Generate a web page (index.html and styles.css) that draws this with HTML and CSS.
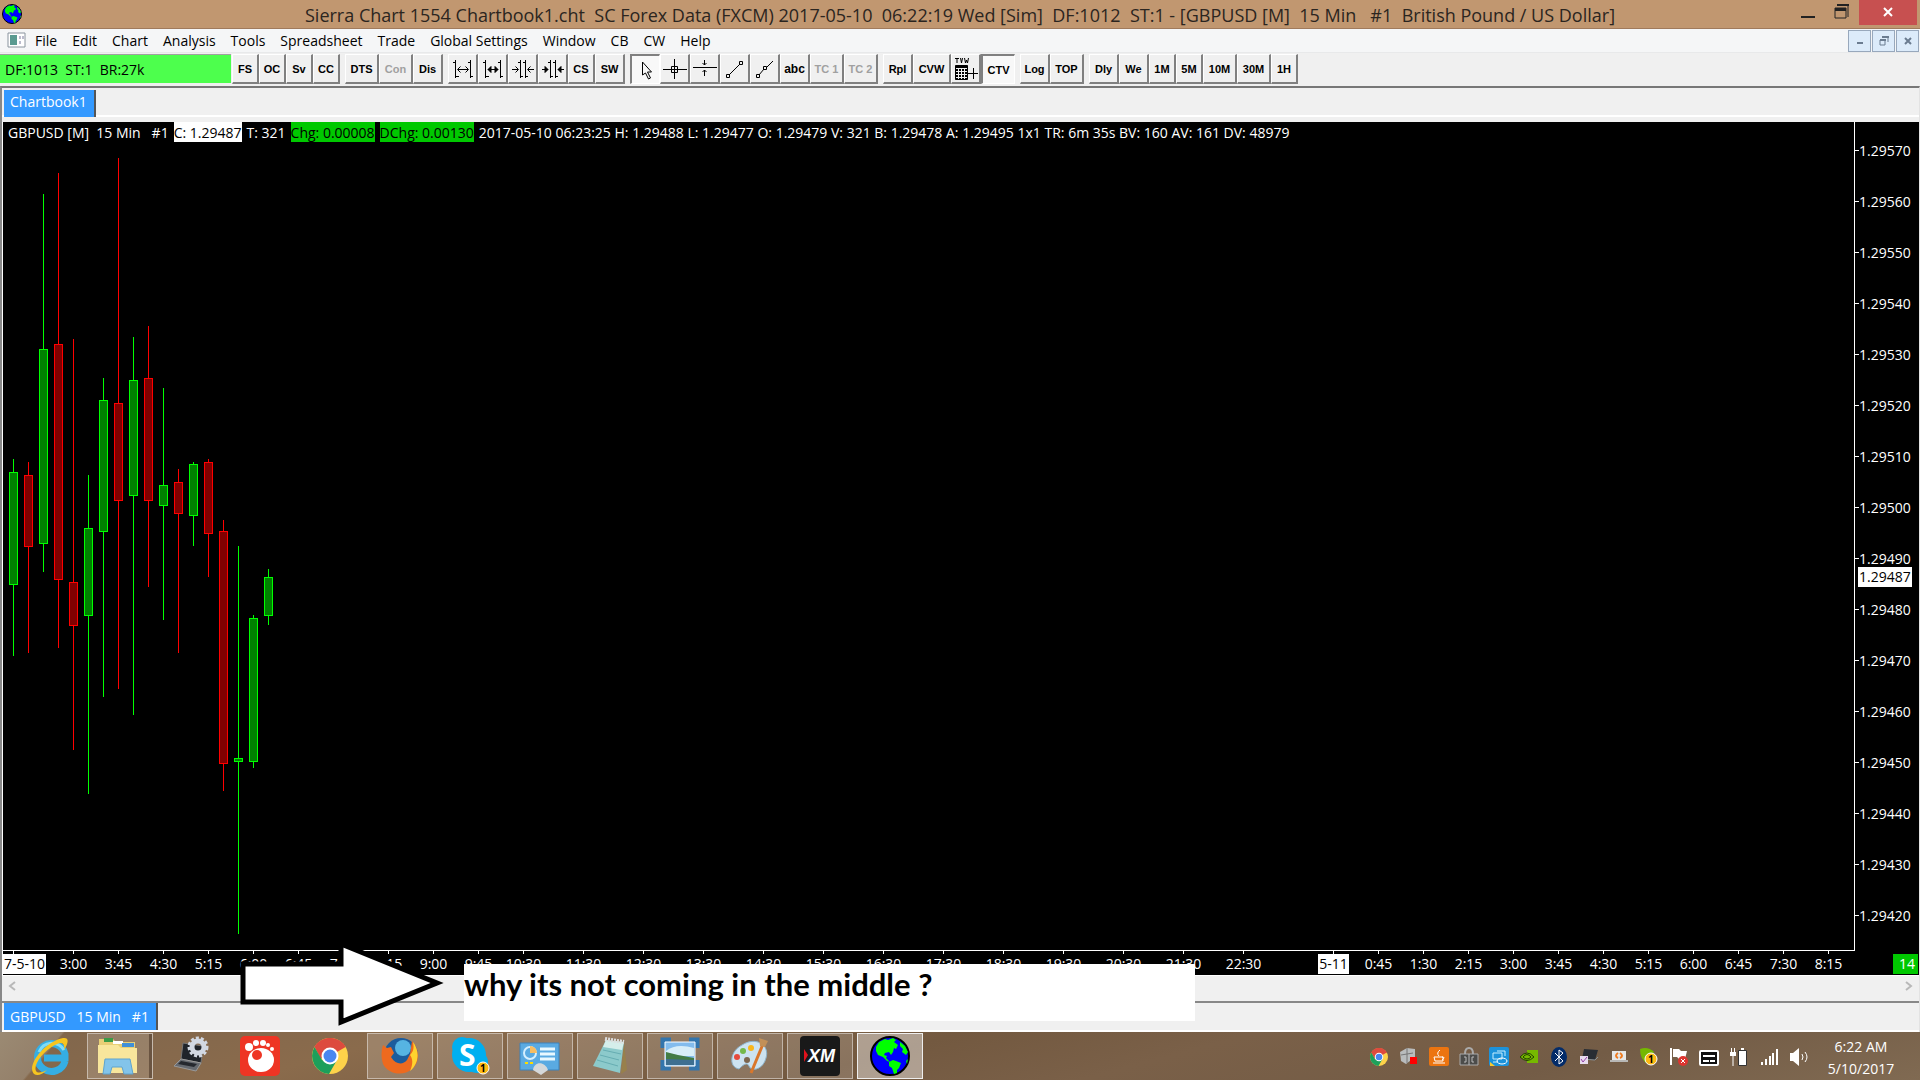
FILE: index.html
```html
<!DOCTYPE html>
<html lang="en">
<head>
	<meta charset="utf-8">
	<title>Sierra Chart</title>
	<link rel="stylesheet" href="styles.css">
</head>
<body>
	<svg class="defs" aria-hidden="true">
		<symbol id="globe" viewBox="0 0 40 40">
			<circle cx="20" cy="20" r="19" fill="#00f" stroke="#000" stroke-width="2"/>
			<path d="M6 11l3-5 6-3 3 1 5-2 3 2-2 2 4 3-2 4-2-1-1 4-2 3-2-3-4 1-1 2 3 1-1 2 4 4-3-1-4-4-5-2-2-4z" fill="#0f0"/>
			<path d="M19 26l4-2 3 1 5 2-2 5-2 2v3l-3 1-2-6-3-2zM30 6l5 4 3 6-2 3-4-3 1-3-3-3zM36 25l2-2-1 5z" fill="#0f0"/>
		</symbol>
		<symbol id="chrome" viewBox="0 0 36 36">
			<circle cx="18" cy="18" r="18" fill="#fdd24a"/>
			<path d="M18 18L2.500 9A18 18 0 0 1 33.600 9z" fill="#dd4b3e"/>
			<path d="M18 9h15.600A18 18 0 0 0 2.500 9L9 21z" fill="#dd4b3e"/>
			<path d="M2.500 9A18 18 0 0 0 17 36l8-14-7 4-8-4z" fill="#1d9f5b"/>
			<circle cx="18" cy="18" r="8.500" fill="#fff"/>
			<circle cx="18" cy="18" r="6.500" fill="#4a86f0"/>
		</symbol>
	</svg>

	<header class="title-bar">
		<svg class="app-icon"><use href="#globe"/></svg>
		<h1>Sierra Chart 1554 Chartbook1.cht  SC Forex Data (FXCM) 2017-05-10  06:22:19 Wed [Sim]  DF:1012  ST:1 - [GBPUSD [M]  15 Min   #1  British Pound / US Dollar]</h1>
		<div class="window-buttons">
			<button class="win-btn" aria-label="Minimize"><svg width="16" height="20"><path d="M1 14h14v2H1z" fill="#222"/></svg></button>
			<button class="win-btn" aria-label="Restore"><svg width="18" height="20"><path d="M4 3h11v12M2 6h11v10H2z" fill="none" stroke="#222"/><path d="M4 2h12v2H4zM2 6h11v3H2z" fill="#222"/></svg></button>
			<button class="win-btn win-close" aria-label="Close"><svg width="12" height="10"><path d="M2 1l8 8M10 1L2 9" stroke="#fff" stroke-width="2"/></svg></button>
		</div>
	</header>

	<nav class="menu-bar">
		<svg class="doc-icon" width="20" height="17"><path d="M1 1h17v14H1z" fill="#fff" stroke="#8a949e"/><path d="M3 3h7v10H3z" fill="#5a9a90"/><path d="M12 4h2v3h-2zM15 4h2v3h-2zM12 9h2v3h-2z" fill="#bbc"/></svg>
		<button>File</button><button>Edit</button><button>Chart</button><button>Analysis</button><button>Tools</button><button>Spreadsheet</button><button>Trade</button><button>Global Settings</button><button>Window</button><button>CB</button><button>CW</button><button>Help</button>
		<div class="mdi-buttons">
			<button aria-label="Minimize chart"><svg width="10" height="10"><path d="M2 6h6v2H2z" fill="#6b7c90"/></svg></button>
			<button aria-label="Restore chart"><svg width="10" height="10"><path d="M3 1h6v5M1 4h5v5H1z" fill="none" stroke="#6b7c90"/><path d="M3 0h7v2H3zM1 3h6v2H1z" fill="#6b7c90"/></svg></button>
			<button aria-label="Close chart"><svg width="10" height="10"><path d="M2 2l6 6M8 2L2 8" stroke="#6b7c90" stroke-width="2"/></svg></button>
		</div>
	</nav>

	<div class="toolbar">
		<div class="feed-status">DF:1013  ST:1  BR:27k</div>
		<div class="tool-group">
			<button class="narrow">FS</button><button class="narrow">OC</button><button class="narrow">Sv</button><button class="narrow">CC</button>
		</div>
		<div class="tool-group">
			<button class="wide">DTS</button><button class="wide" disabled>Con</button><button>Dis</button>
		</div>
		<div class="tool-group">
			<button aria-label="Increase spacing"><svg width="22" height="22"><path d="M3.500 2v18M1 4.500h2M4 18.500h3M18.500 2v18M16 4.500h2M19 18.500h2M6 11.500h10M8.500 8.500l-3 3 3 3M13.500 8.500l3 3-3 3"/></svg></button>
			<button aria-label="Increase bar width"><svg width="22" height="22"><path d="M3.500 2v18M1 4.500h2M4 18.500h3M18.500 2v18M16 4.500h2M19 18.500h2M6 11.500h10"/><path d="M9 8.500l-3 3 3 3zM13 8.500l3 3-3 3z" class="solid"/></svg></button>
			<button aria-label="Decrease spacing"><svg width="22" height="22"><path d="M8.500 2v18M6 4.500h2M9 18.500h2M13.500 2v18M11 4.500h2M14 18.500h2M0 11.500h6M3.500 8.500l3 3-3 3M22 11.500h-6M18.500 8.500l-3 3 3 3"/></svg></button>
			<button aria-label="Decrease bar width"><svg width="22" height="22"><path d="M8.500 2v18M6 4.500h2M9 18.500h2M13.500 2v18M11 4.500h2M14 18.500h2M0 11.500h6M22 11.500h-6"/><path d="M3 8.500l3 3-3 3zM19 8.500l-3 3 3 3z" class="solid"/></svg></button>
			<button class="narrow">CS</button><button>SW</button>
		</div>
		<div class="tool-group">
			<button class="pressed" aria-label="Pointer"><svg width="22" height="22"><path d="M7.500 3v13l3-2 3 6 2-1-3-6h4z"/></svg></button>
			<button aria-label="Cross hair"><svg width="24" height="22"><path d="M0 11.500h24M11.500 1v20M8.500 8.500h6v6h-6z"/></svg></button>
			<button aria-label="Horizontal line"><svg width="24" height="22"><path d="M0 9.500h24M11.500 2v5M9.500 5l2 2 2-2M11.500 18v-6M9.500 14l2-2 2 2"/></svg></button>
			<button aria-label="Line"><svg width="22" height="22"><path d="M5 17L16 6M2.500 16.500h3v3h-3zM15.500 3.500h3v3h-3z"/></svg></button>
			<button aria-label="Ray"><svg width="22" height="22"><path d="M5 17l5-6M13 9l6-6M2.500 16.500h3v3h-3zM9.500 8.500h3v3h-3z"/></svg></button>
			<button class="plain">abc</button><button class="wide" disabled>TC 1</button><button class="wide" disabled>TC 2</button>
		</div>
		<div class="tool-group">
			<button>Rpl</button><button class="extra-wide">CVW</button>
			<button aria-label="Trade volume window"><svg width="26" height="26"><path d="M2 2.500h4M4 2v5M7.500 2l1 5 1-5M11.500 2l1 5 1-3 1 3 1-5"/><path d="M2.500 9.500h12v14h-12z" class="solid"/><path class="grid" d="M3 12.500h11M3 15.500h11M3 18.500h11M3 21.500h11M5.500 12v11M8.500 12v11M11.500 12v11"/><path d="M15 17.500h10M20.500 12v11"/></svg></button>
			<button class="wide pressed">CTV</button>
		</div>
		<div class="tool-group">
			<button>Log</button><button class="wide">TOP</button>
		</div>
		<div class="tool-group">
			<button>Dly</button><button>We</button><button class="narrow">1M</button><button class="narrow">5M</button><button class="wide">10M</button><button class="wide">30M</button><button class="narrow">1H</button>
		</div>
	</div>

	<main class="workspace">
		<div class="book-tabs"><button class="tab">Chartbook1</button></div>

		<section class="chart">
			<div class="plot">
				<svg class="candles" id="candles"></svg>
				<div class="chart-info">
					<span>GBPUSD [M]  15 Min   #1</span>
					<span class="last">C: 1.29487</span>
					<span>T: 321</span>
					<span class="up">Chg: 0.00008</span>
					<span class="up">DChg: 0.00130</span>
					<span>2017-05-10 06:23:25 H: 1.29488 L: 1.29477 O: 1.29479 V: 321 B: 1.29478 A: 1.29495 1x1 TR: 6m 35s BV: 160 AV: 161 DV: 48979</span>
				</div>
			</div>
			<div class="price-axis" id="price-axis"></div>
			<div class="time-axis" id="time-axis"></div>
			<div class="axis-corner"><span>14</span></div>
		</section>

		<div class="scroll-bar">
			<button aria-label="Scroll left"><svg width="8" height="10"><path d="M7 1L2 5l5 4"/></svg></button>
			<button aria-label="Scroll right"><svg width="8" height="10"><path d="M1 1l5 4-5 4"/></svg></button>
		</div>

		<div class="chart-tabs"><button class="tab">GBPUSD   15 Min   #1</button></div>

		<svg class="note-arrow" width="210" height="90"><path d="M8 22h98V2l96 39-96 39V60H8z" fill="#fff" stroke="#000" stroke-width="5"/></svg>
		<p class="note">why its not coming in the middle ?</p>
	</main>

	<footer class="taskbar">
		<div class="apps">
			<button class="app" aria-label="Internet Explorer"><svg width="40" height="40"><path d="M35 25A14 14 0 1 1 35 18v4H14" fill="none" stroke="#35aee4" stroke-width="7"/><path d="M34 14A14 14 0 0 0 9 16" fill="none" stroke="#7fdcf8" stroke-width="3"/><path d="M4 38C-4 30 14 6 33 2c7-1 5 6 1 12 1-7-2-9-9-5C13 15 3 29 6 35c2 3 7 1 11-1-5 5-10 6-13 4z" fill="#f6c520"/></svg></button>
			<button class="app open stacked" aria-label="File Explorer"><svg width="42" height="40"><path d="M2 3h14l3 3h19v28H2z" fill="#e8cf76"/><path d="M7 2h9v4H7z" fill="#3b9c46"/><path d="M16 5h10v3H16z" fill="#fff"/><path d="M25 7h12v4H25z" fill="#3f8fd8"/><path d="M1 9h20l3 3h16v25H1z" fill="#f8e69c"/><path d="M6 38l2-15h25l3 15h-9l-2-7H15l-2 7z" fill="#83c4ea" stroke="#5ea4cf"/></svg></button>
			<button class="app" aria-label="Device settings"><svg width="40" height="40"><path d="M13 7l20 3-2 17-20-4z" fill="#20242a" stroke="#777"/><path d="M11 23l20 4-5 8-22-5z" fill="#666a70" stroke="#999"/><path d="M11 25l16 3-3 3-16-3z" fill="#25282e"/><circle cx="28" cy="11" r="6" fill="none" stroke="#d2d8e2" stroke-width="5"/><circle cx="28" cy="11" r="9" fill="none" stroke="#d2d8e2" stroke-width="3" stroke-dasharray="3 2"/></svg></button>
			<button class="app" aria-label="GOM Player"><svg width="40" height="40"><rect width="40" height="40" rx="5" fill="#ee3524"/><ellipse cx="21" cy="24" rx="13" ry="12" fill="#fff"/><circle cx="17" cy="19" r="5" fill="#ee3524"/><circle cx="9" cy="11" r="4" fill="#fff"/><circle cx="16" cy="7" r="3" fill="#fff"/><circle cx="23" cy="7" r="3" fill="#fff"/><circle cx="28" cy="9" r="2" fill="#fff"/><circle cx="32" cy="13" r="2" fill="#fff"/></svg></button>
			<button class="app" aria-label="Chrome"><svg width="36" height="36"><use href="#chrome"/></svg></button>
			<button class="app open" aria-label="Firefox"><svg width="38" height="38"><circle cx="20" cy="18" r="17" fill="#1c5c9c"/><circle cx="22" cy="11" r="8" fill="#56b4e2"/><path d="M2 8l4 3 4-1 3 6-3 4c5 8 12 8 16 3l3-6 2-13c8 9 8 21 0 28-9 8-24 5-29-5C0 20 0 14 2 8z" fill="#ee6a1e"/><path d="M32 5c7 9 6 22-3 29 3-7 3-12 0-16 4-4 4-8 3-13z" fill="#ffd32e"/></svg></button>
			<button class="app open" aria-label="Skype"><svg width="40" height="40"><circle cx="12" cy="11" r="10" fill="#00aff0"/><circle cx="27" cy="26" r="11" fill="#00aff0"/><circle cx="19" cy="19" r="17" fill="#00aff0"/><text x="9" y="30" class="skype-letter">S</text><circle cx="33" cy="32" r="6" fill="#fdb913" stroke="#fff"/><text x="30" y="36" class="badge">1</text></svg></button>
			<button class="app open" aria-label="Control Panel"><svg width="42" height="40"><path d="M1 7h39v27H1z" fill="#5aaae2" stroke="#3c82bb"/><circle cx="11" cy="17" r="6" fill="none" stroke="#d5efff" stroke-width="2"/><path d="M11 10a7 7 0 0 1 7 7h-7z" fill="#f8bd62"/><path d="M21 13h15M21 18h15M21 23h15" stroke="#e8f8ff" stroke-width="3"/><path d="M6 27h3M11 27h3" stroke="#fd0" stroke-width="2"/><path d="M14 34c1-9 12-9 15 0l-7 5z" fill="#d5d8da"/></svg></button>
			<button class="app open" aria-label="Notepad"><svg width="40" height="40"><path d="M34 6l3 28-6 4z" fill="#98804b"/><path d="M16 4l18 2-4 31L3 30z" fill="#8ccacb"/><path d="M16 4l18 2-2 8-19-3z" fill="#d5eeeb"/><path d="M13 14l18 4M10 19l19 5M7 24l21 6" stroke="#66adb2"/><path d="M15 3l19 3" stroke="#ddd" stroke-width="4" stroke-dasharray="2 1"/></svg></button>
			<button class="app open" aria-label="Pictures"><svg width="40" height="40"><path d="M3 12V4h8M29 4h8v8M37 24v8h-8M11 32H3v-8" fill="none" stroke="#3375ad" stroke-width="5"/><path d="M5 6h30v24H5z" fill="#83bced" stroke="#fff"/><path d="M6 15q10-8 28-3v8H6z" fill="#d8eef8"/><path d="M6 16l12 3 16 3v7H6z" fill="#437c45"/><path d="M6 23l28 1v5H6z" fill="#3e6f91"/></svg></button>
			<button class="app open" aria-label="Paint"><svg width="40" height="40"><path d="M12 9c14-9 28 0 24 13-3 12-15 14-17 8-2-5-7 0-10 3C-2 31 0 15 12 9z" fill="#cce3f1" stroke="#8db4cc"/><circle cx="7" cy="21" r="3" fill="#e64b3d"/><circle cx="13" cy="15" r="3" fill="#74b94b"/><circle cx="21" cy="12" r="3" fill="#f9b61b"/><circle cx="17" cy="24" r="3" fill="#7d664f"/><path d="M33 8L21 37" stroke="#d9772c" stroke-width="3"/><path d="M29 2l9 3-3 6-5-1z" fill="#c29058"/></svg></button>
			<button class="app open" aria-label="XM"><svg width="40" height="40"><rect width="40" height="40" rx="4" fill="#191919"/><path d="M4 13l4 6-4 7z" fill="#e2121c"/><text x="8" y="26" class="xm">XM</text></svg></button>
			<button class="app open active" aria-label="Sierra Chart"><svg width="40" height="40"><use href="#globe"/></svg></button>
		</div>
		<div class="tray">
			<button aria-label="Chrome notifications"><svg width="18" height="18"><use href="#chrome"/></svg></button>
			<button aria-label="Servers"><svg width="20" height="20"><path d="M1 5l7-4 8 1v8l-9 7-5-3z" fill="#b9bcbd"/><path d="M8 1v15M2 8l12-2" stroke="#777"/><path d="M11 10h7v7h-7z" fill="#f00"/></svg></button>
			<button aria-label="Java"><svg width="20" height="20"><rect width="20" height="19" rx="2" fill="#ec7410"/><path d="M11 3q-4 3-1 6M5 10h9v4H6zM13 10q4 0 0 3M4 16h12" fill="none" stroke="#fff"/></svg></button>
			<button aria-label="Security"><svg width="20" height="20"><path d="M6 7q0-6 4-6t4 6" fill="none" stroke="#aaa" stroke-width="2"/><path d="M1 7h18v11H1z" fill="#4c4c4a" stroke="#aaa"/><path d="M10 7v11M5 10h2v5H5M15 10h-2v5h2" stroke="#bbb" fill="none"/></svg></button>
			<button aria-label="Intel graphics"><svg width="20" height="20"><rect width="20" height="19" rx="2" fill="#1c92da"/><path d="M4 6h9v6H4zM8 4h8v5M4 15h5" fill="none" stroke="#c8efff"/><ellipse cx="13" cy="14" rx="5" ry="3" fill="none" stroke="#fff"/><path d="M1 15l5 4H1z" fill="#f7ca30"/></svg></button>
			<button aria-label="NVIDIA"><svg width="20" height="20"><path d="M8 3h11v13H8z" fill="#76b900"/><path d="M1 10q7-8 14 0-7 7-14 0z" fill="#76b900" stroke="#244000"/><path d="M4 10q4-5 8 0-4 4-8 0z" fill="none" stroke="#244000"/></svg></button>
			<button aria-label="Bluetooth"><svg width="16" height="20"><ellipse cx="8" cy="10" rx="8" ry="10" fill="#042c69"/><path d="M4 6l8 8-4 3V3l4 3-8 8" fill="none" stroke="#fff"/></svg></button>
			<button aria-label="Tablet"><svg width="20" height="20"><path d="M5 2l14 1-3 10-13-1z" fill="#292d34"/><path d="M3 12l13 1 3-3" stroke="#8b9298" fill="none"/><path d="M1 9h8v8H1z" fill="#e8dcee"/><path d="M2 12l2 3 4-5" fill="none" stroke="#9340a9"/></svg></button>
			<button aria-label="Network computer"><svg width="20" height="20"><path d="M3 4h14v10H3z" fill="#e5e8e9"/><path d="M1 13h18v2H1z" fill="#b8b8b6"/><path d="M9 6q-4 3 0 5M11 6q4 3 0 5" stroke="#ef7b20" fill="none" stroke-width="2"/></svg></button>
			<button aria-label="Skype status"><svg width="20" height="20"><path d="M1 2q8-3 14 3l-6 12Q1 13 1 2z" fill="#75b800"/><circle cx="12" cy="12" r="6" fill="#fdb913" stroke="#fff"/><text x="9" y="16" class="badge">1</text></svg></button>
			<button aria-label="Action Center"><svg width="20" height="20"><path d="M2 1v17" stroke="#fff" stroke-width="2"/><path d="M4 2h6l2 2h6l-2 8H10l-2-2H4z" fill="#fff"/><circle cx="14" cy="14" r="5" fill="#dd3530"/><path d="M12 12l4 4M16 12l-4 4" stroke="#fff"/></svg></button>
			<button aria-label="Touch keyboard"><svg width="20" height="20"><rect x="1" y="4" width="18" height="14" rx="1" fill="#111" stroke="#fff" stroke-width="2"/><path d="M4 9h12M4 14h6M11 14h5" stroke="#fff" stroke-width="2"/></svg></button>
			<button aria-label="Battery"><svg width="20" height="20"><path d="M1 5h6v4H1z" fill="#fff"/><path d="M2.500 1v4M5.500 1v4M4 9v10" stroke="#fff"/><path d="M9.500 3.500h8v15h-8z" fill="#fff" stroke="#333"/><path d="M12 1h3v2h-3z" fill="#fff"/></svg></button>
			<button aria-label="Signal"><svg width="20" height="20"><path d="M3 18v-3M7 18v-6M11 18V9M14 18V6M18 18V2" stroke="#fff" stroke-width="2"/></svg></button>
			<button aria-label="Volume"><svg width="20" height="20"><path d="M1 6h3l6-5v18l-6-5H1z" fill="#fff"/><path d="M13 7q2 3 0 6M16 5q4 5 0 10" stroke="#fff" fill="none"/></svg></button>
		</div>
		<time class="clock">6:22 AM<br>5/10/2017</time>
	</footer>

	<script>
		// y positions in the plot: high, body top, body bottom, low
		const bars = [
			['up', 337, 350, 463, 534],
			['down', 340, 353, 425, 531],
			['up', 72, 227, 422, 450],
			['down', 51, 222, 458, 526],
			['down', 217, 460, 504, 628],
			['up', 353, 406, 494, 672],
			['up', 256, 278, 410, 575],
			['down', 36, 281, 379, 567],
			['up', 215, 258, 374, 593],
			['down', 204, 256, 379, 465],
			['up', 266, 363, 384, 498],
			['down', 347, 360, 392, 531],
			['up', 340, 342, 394, 424],
			['down', 337, 340, 412, 455],
			['down', 398, 409, 642, 669],
			['up', 424, 636, 640, 812],
			['up', 493, 496, 640, 646],
			['up', 447, 455, 494, 503]
		];
		const step = 15;
		const candles = document.getElementById('candles');
		let html = '';
		bars.forEach(([dir, high, top, bottom, low], i) => {
			const x = 6 + i * step;
			html += `<g class="${dir}"><path class="wick" d="M${x + 4} ${high}h1V${low}h-1z"/>`;
			html += `<rect x="${x}" y="${top}" width="9" height="${bottom - top}"/>`;
			html += `<rect class="body" x="${x + 1}" y="${top + 1}" width="7" height="${bottom - top - 2}"/></g>`;
		});
		candles.innerHTML = html;

		const priceAxis = document.getElementById('price-axis');
		for (let p = 129570; p >= 129420; p -= 10) {
			priceAxis.innerHTML += `<span class="price">${(p / 100000).toFixed(5)}</span>`;
		}
		priceAxis.innerHTML += '<span class="current-price">1.29487</span>';

		// label and the bar number it stands under
		const times = [
			['3:00', 4], ['3:45', 7], ['4:30', 10], ['5:15', 13], ['6:00', 16], ['6:45', 19],
			['7:30', 22], ['8:15', 25], ['9:00', 28], ['9:45', 31], ['10:30', 34], ['11:30', 38],
			['12:30', 42], ['13:30', 46], ['14:30', 50], ['15:30', 54], ['16:30', 58], ['17:30', 62],
			['18:30', 66], ['19:30', 70], ['20:30', 74], ['21:30', 78], ['22:30', 82], ['5-11', 88],
			['0:45', 91], ['1:30', 94], ['2:15', 97], ['3:00', 100], ['3:45', 103], ['4:30', 106],
			['5:15', 109], ['6:00', 112], ['6:45', 115], ['7:30', 118], ['8:15', 121]
		];
		const timeAxis = document.getElementById('time-axis');
		timeAxis.innerHTML = '<div class="time first"><span class="day">7-5-10</span></div>';
		times.forEach(([label, bar]) => {
			const cls = label.includes('-') ? 'day' : '';
			timeAxis.innerHTML += `<div class="time" style="grid-column: ${bar + 1}"><span class="${cls}">${label}</span></div>`;
		});
	</script>
</body>
</html>
```

FILE: styles.css
```css
* {
	box-sizing: border-box;
}

body {
	margin: 0;
	height: 100vh;
	display: flex;
	flex-direction: column;
	overflow: hidden;
	background: #f0f0f0;
	color: #000;
	font: 14px/20px "Open Sans", "Noto Sans", sans-serif;
}

button {
	margin: 0;
	padding: 0;
	border: 0;
	background: none;
	color: inherit;
	font: inherit;
	white-space: pre;
}

svg {
	display: block;
	flex: none;
}

.defs {
	position: absolute;
	width: 0;
	height: 0;
}

/* title bar */
.title-bar {
	flex: none;
	display: grid;
	grid-template-columns: 1fr auto 1fr;
	height: 29px;
	background: #c19770;
	border-bottom: 1px solid #a07a5c;
}

.title-bar h1 {
	margin: 0;
	font-size: 18px;
	line-height: 30px;
	font-weight: 400;
	color: #2b2520;
	white-space: pre;
}

.app-icon {
	width: 20px;
	height: 20px;
	margin: 4px 2px;
}

.window-buttons {
	display: flex;
	justify-content: flex-end;
	padding-right: 3px;
}

.win-btn {
	display: flex;
	justify-content: center;
	padding-top: 2px;
	width: 34px;
	height: 25px;
}

.win-close {
	width: 58px;
	padding-top: 7px;
	background: #c75050;
}

/* menu */
.menu-bar {
	flex: none;
	display: flex;
	align-items: center;
	height: 24px;
	padding-left: 7px;
	background: #f5f6f7;
	border-bottom: 1px solid #e8e9ea;
}

.menu-bar > button {
	padding: 1px 7px 0 8px;
}

.mdi-buttons {
	display: flex;
	gap: 1px;
	margin-left: auto;
	padding-right: 1px;
}

.mdi-buttons button {
	display: flex;
	align-items: center;
	justify-content: center;
	width: 23px;
	height: 22px;
	background: #dcebfa;
	border: 1px solid #98a8bc;
}

/* toolbar */
.toolbar {
	flex: none;
	display: flex;
	align-items: flex-start;
	gap: 5px;
	height: 33px;
	padding-top: 1px;
}

.feed-status {
	width: 231px;
	height: 29px;
	margin-right: -4px;
	padding-left: 5px;
	border-top: 1px solid #a0a0a0;
	background: #4dff4d;
	line-height: 30px;
	white-space: pre;
}

.tool-group {
	display: flex;
}

.tool-group button {
	display: flex;
	align-items: center;
	justify-content: center;
	width: 30px;
	height: 30px;
	background: #f0f0f0;
	border: 1px solid #fff;
	border-right: 2px solid #808080;
	border-bottom: 2px solid #808080;
	font: bold 11px/20px "Liberation Sans", Arial, sans-serif;
}

.tool-group button.narrow {
	width: 27px;
}

.tool-group button.wide {
	width: 34px;
}

.tool-group button.extra-wide {
	width: 38px;
}

.tool-group button.plain {
	font-size: 12px;
}

.tool-group button:disabled {
	color: #a0a0a0;
}

.tool-group button.pressed {
	background: #f8f8f8;
	border: 1px solid #fff;
	border-top: 2px solid #808080;
	border-left: 2px solid #808080;
}

.tool-group path {
	stroke: #000;
	fill: none;
}

.tool-group path.solid {
	fill: #000;
}

.tool-group path.grid {
	stroke: #f0f0f0;
}

/* workspace */
.workspace {
	position: relative;
	flex: 1;
	min-height: 0;
	display: flex;
	flex-direction: column;
	border-top: 2px solid #777;
	border-left: 2px solid #888;
	border-right: 1px solid #e3e3e3;
}

.book-tabs {
	flex: none;
	height: 29px;
	margin-bottom: 5px;
	padding: 2px 0 0 2px;
	border-bottom: 2px solid #fff;
}

.tab {
	display: block;
	height: 27px;
	padding: 0 7px 3px 6px;
	background: #39f;
	border-right: 2px solid #555;
	color: #fff;
}

.chart {
	flex: 1;
	min-height: 0;
	display: grid;
	grid-template: minmax(0, 1fr) 24px / minmax(0, 1fr) 64px;
	border-left: 1px solid #fff;
	background: #000;
	color: #fff;
}

.plot {
	position: relative;
	border-right: 1px solid #fff;
	border-bottom: 1px solid #fff;
}

.candles {
	width: 100%;
	height: 100%;
}

.up rect,
.up .wick {
	fill: #0f0;
}

.down rect,
.down .wick {
	fill: #f00;
}

.up .body {
	fill: #008000;
}

.down .body {
	fill: #800000;
}

.chart-info {
	position: absolute;
	top: 0;
	left: 5px;
	display: flex;
	gap: 5px;
	height: 20px;
	line-height: 22px;
	white-space: pre;
}

.last {
	background: #fff;
	color: #000;
}

.chart-info .up {
	background: #00c800;
	color: #000;
}

.price-axis {
	position: relative;
	padding-top: 3px;
}

.price {
	position: relative;
	display: block;
	height: 51px;
	padding-left: 4px;
	line-height: 51px;
}

.price::before {
	content: "";
	position: absolute;
	left: 0;
	top: 25px;
	width: 4px;
	height: 1px;
	background: #fff;
}

.current-price {
	position: absolute;
	top: 445px;
	left: 3px;
	padding: 0 1px;
	background: #fff;
	color: #000;
}

.time-axis {
	display: grid;
	grid-template-rows: 24px;
	grid-auto-columns: 15px;
	padding-left: 3px;
	overflow: hidden;
}

.time {
	grid-row: 1;
	display: flex;
	flex-direction: column;
	align-items: center;
	white-space: nowrap;
}

.time::before {
	content: "";
	flex: none;
	width: 1px;
	height: 3px;
	background: #fff;
}

.time.first {
	grid-column: 1;
	align-items: flex-start;
	margin-left: -3px;
}

.time.first::before {
	margin-left: 10px;
}

.time .day {
	padding: 0 1px;
	background: #fff;
	color: #000;
}

.axis-corner {
	display: flex;
	justify-content: flex-end;
	padding: 3px 1px 1px;
}

.axis-corner span {
	width: 25px;
	padding-left: 6px;
	background: #00c800;
}

.scroll-bar {
	flex: none;
	display: flex;
	align-items: center;
	justify-content: space-between;
	height: 26px;
	padding: 0 6px 5px;
	border-top: 1px solid #fff;
}

.scroll-bar path {
	fill: none;
	stroke: #b8b8b8;
	stroke-width: 2px;
}

.chart-tabs {
	flex: none;
	height: 31px;
	padding-left: 2px;
	border-top: 2px solid #888;
	border-bottom: 2px solid #fff;
}

.chart-tabs .tab {
	padding-top: 3px;
}

/* user note over the chart */
.note-arrow {
	position: absolute;
	left: 233px;
	bottom: 0;
}

.note {
	position: absolute;
	left: 462px;
	bottom: 11px;
	width: 731px;
	height: 57px;
	margin: 0;
	background: #fff;
	font: bold 31px/40px Lato, "Open Sans", sans-serif;
}

/* taskbar */
.taskbar {
	flex: none;
	display: flex;
	align-items: center;
	height: 48px;
	padding: 0 12px 0 17px;
	background: linear-gradient(130deg, #9b8a73 0, #94806a 48px, transparent 50px), linear-gradient(165deg, #80664c 0%, #8a6b4c 20%, #735940 46%, #7a6048 60%, #735c46 80%, #806a52 100%);
}

.apps {
	display: flex;
	gap: 4px;
}

.app {
	display: flex;
	align-items: center;
	justify-content: center;
	width: 66px;
	height: 46px;
	border: 1px solid transparent;
}

.app.open {
	background: rgba(255, 255, 255, 0.16);
	border-color: rgba(255, 255, 255, 0.45);
}

.app.stacked {
	padding-right: 4px;
	box-shadow: inset -4px 0 0 -1px rgba(60, 40, 25, 0.5);
}

.app.active {
	background: rgba(255, 255, 255, 0.42);
	border-color: #eee;
}

.skype-letter {
	fill: #fff;
	font: bold 30px "Open Sans", sans-serif;
}

.badge {
	font: bold 10px "Open Sans", sans-serif;
}

.xm {
	fill: #fff;
	font: italic bold 18px "Liberation Sans", sans-serif;
}

.tray {
	display: flex;
	margin-left: auto;
}

.tray button {
	display: flex;
	align-items: center;
	justify-content: center;
	width: 30px;
	height: 46px;
	padding-top: 2px;
}

.clock {
	width: 94px;
	padding-top: 3px;
	color: #fff;
	line-height: 22px;
	text-align: center;
}
```
